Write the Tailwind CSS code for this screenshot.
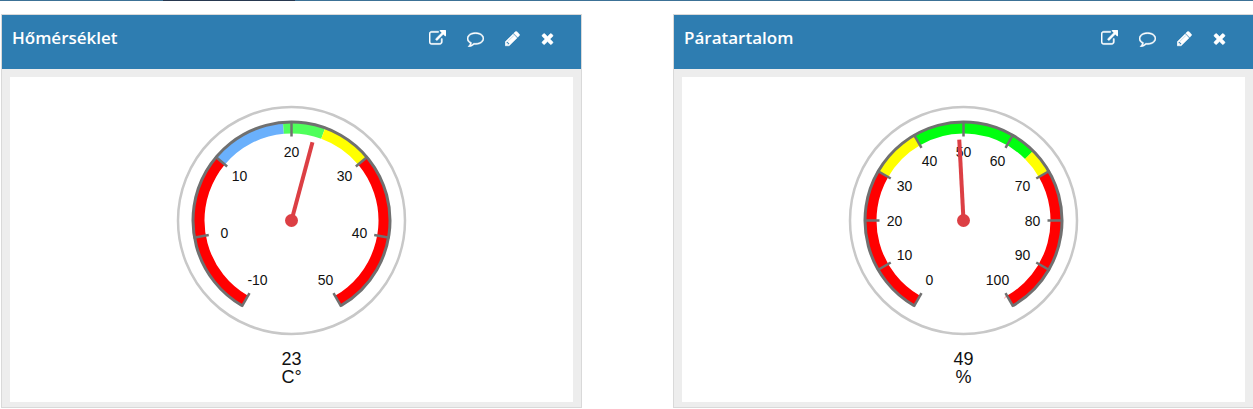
<!DOCTYPE html>
<html lang="hu">
<head>
    <meta charset="UTF-8">
    <meta name="viewport" content="width=device-width, initial-scale=1.0">
    <title>Hőmérséklet és páratartalom</title>
    <script src="https://cdn.jsdelivr.net/npm/@tailwindcss/browser@4"></script>
</head>
<body class="bg-white overflow-x-hidden font-['Liberation_Sans',Arial,sans-serif]">
    <!-- Shared icons -->
    <svg class="hidden" aria-hidden="true">
        <symbol id="icon-export" viewBox="0 0 1792 1792">
            <path d="M1408 928v320q0 119-84.5 203.5t-203.5 84.5h-832q-119 0-203.5-84.5t-84.5-203.5v-832q0-119 84.5-203.5t203.5-84.5h704q14 0 23 9t9 23v64q0 14-9 23t-23 9h-704q-66 0-113 47t-47 113v832q0 66 47 113t113 47h832q66 0 113-47t47-113v-320q0-14 9-23t23-9h64q14 0 23 9t9 23zm384-864v512q0 26-19 45t-45 19-45-19l-176-176-652 652q-10 10-23 10t-23-10l-114-114q-10-10-10-23t10-23l652-652-176-176q-19-19-19-45t19-45 45-19h512q26 0 45 19t19 45z"/>
        </symbol>
        <symbol id="icon-comment" viewBox="0 0 1792 1792">
            <path d="M896 384q-204 0-381.500 69.500t-282 187.500-104.500 255q0 112 71.500 213.500t201.500 175.500l87 50-27 96q-24 91-70 172 152-63 275-171l43-38 57 6q69 8 130 8 204 0 381.500-69.500t282-187.500 104.500-255-104.500-255-282-187.500-381.500-69.500zm896 512q0 174-120 321.500t-326 233-450 85.500q-70 0-145-8-198 175-460 242-49 14-114 22h-5q-15 0-27-10.500t-16-27.500v-1q-3-4-.5-12t2-10 4.500-9.500l6-9 7-8.500 8-9q7-8 31-34.500t34.500-38 31-39.500 32.500-51 27-59 26-76q-157-89-247.500-220t-90.500-281q0-174 120-321.500t326-233 450-85.500 450 85.500 326 233 120 321.500z"/>
        </symbol>
        <symbol id="icon-pencil" viewBox="128 0 1536 1792">
            <path d="M491 1536l91-91-235-235-91 91v107h128v128h107zm523-928q0-22-22-22-10 0-17 7l-542 542q-7 7-7 17 0 22 22 22 10 0 17-7l542-542q7-7 7-17zm-54-192l416 416-832 832h-416v-416zm683 96q0 53-37 90l-166 166-416-416 166-165q36-38 90-38 53 0 91 38l235 234q37 39 37 91z"/>
        </symbol>
        <symbol id="icon-close" viewBox="192 0 1408 1792">
            <path d="M1490 1322q0 40-28 68l-136 136q-28 28-68 28t-68-28l-294-294-294 294q-28 28-68 28t-68-28l-136-136q-28-28-28-68t28-68l294-294-294-294q-28-28-28-68t28-68l136-136q28-28 68-28t68 28l294 294 294-294q28-28 68-28t68 28l136 136q28 28 28 68t-28 68l-294 294 294 294q28 28 28 68z"/>
        </symbol>
    </svg>

    <div class="flex h-px bg-[#3c7196]">
        <div class="ml-[163px] w-[132px] bg-[#26374f]"></div>
    </div>

    <main class="grid grid-cols-2 gap-[91px] pt-[13px] ml-px -mr-px">
        <!-- Temperature -->
        <section class="border border-[#d9d9d9] bg-[#ededed]">
            <header class="flex h-[54px] items-start justify-between bg-[#2e7db1] pl-[10px] pr-[27px] pt-[11px] text-white">
                <h2 class="font-['Trebuchet_MS','Open_Sans',sans-serif] text-[17px] leading-6 font-semibold">Hőmérséklet</h2>
                <div class="flex h-6 items-center gap-[21px]">
                    <button type="button" aria-label="Exportálás" class="cursor-pointer"><svg class="block h-[17px] w-[17px] fill-current stroke-current stroke-[50]"><use href="#icon-export"/></svg></button>
                    <button type="button" aria-label="Megjegyzés" class="cursor-pointer"><svg class="block h-[17px] w-[17px] fill-current stroke-current stroke-[50]"><use href="#icon-comment"/></svg></button>
                    <button type="button" aria-label="Szerkesztés" class="cursor-pointer"><svg class="block h-[17px] w-[15px] fill-current stroke-current stroke-[50]"><use href="#icon-pencil"/></svg></button>
                    <button type="button" aria-label="Bezárás" class="cursor-pointer"><svg class="block h-[17px] w-[13px] fill-current stroke-current stroke-[50]"><use href="#icon-close"/></svg></button>
                </div>
            </header>
            <div class="px-2 pt-2 pb-[5px]">
                <div class="flex flex-col items-center bg-white pt-[27px] pb-4">
                    <!-- 5 degrees per unit, 0 degrees is up -->
                    <svg class="block h-[233px] w-[233px]" viewBox="-116.5 -116.5 233 233" fill="none">
                        <circle r="113.500" stroke="#c8c8c8" stroke-width="2.500"/>
                        <g stroke-width="11">
                            <circle r="92.500" pathLength="360" stroke="#ff0000" stroke-dasharray="100 360" transform="rotate(-240)"/>
                            <circle r="92.500" pathLength="360" stroke="#6ab0fc" stroke-dasharray="45 360" transform="rotate(-140)"/>
                            <circle r="92.500" pathLength="360" stroke="#4fff5b" stroke-dasharray="25 360" transform="rotate(-95)"/>
                            <circle r="92.500" pathLength="360" stroke="#ffff00" stroke-dasharray="30 360" transform="rotate(-70)"/>
                            <circle r="92.500" pathLength="360" stroke="#ff0000" stroke-dasharray="100 360" transform="rotate(-40)"/>
                        </g>
                        <g stroke="#707070" stroke-width="2.500">
                            <circle r="98.500" stroke-width="3" pathLength="360" stroke-dasharray="300 360" transform="rotate(-240)"/>
                            <path d="M0-84V-99.500" transform="rotate(-150)"/>
                            <path d="M0-84V-99.500" transform="rotate(-100)"/>
                            <path d="M0-84V-99.500" transform="rotate(-50)"/>
                            <path d="M0-84V-99.500"/>
                            <path d="M0-84V-99.500" transform="rotate(50)"/>
                            <path d="M0-84V-99.500" transform="rotate(100)"/>
                            <path d="M0-84V-99.500" transform="rotate(150)"/>
                        </g>
                        <g class="text-[14px]" fill="#111" text-anchor="middle">
                            <text x="-34" y="64">-10</text>
                            <text x="-67" y="17">0</text>
                            <text x="-52" y="-40">10</text>
                            <text x="0" y="-64">20</text>
                            <text x="53" y="-40">30</text>
                            <text x="68" y="17">40</text>
                            <text x="34" y="64">50</text>
                        </g>
                        <path d="M0 0V-81" stroke="#dc3f44" stroke-width="4" transform="rotate(15)"/>
                        <circle r="6.500" fill="#dc3f44"/>
                    </svg>
                    <p class="mt-[13px] text-center text-[18px] leading-[18px] text-[#111]">23<br>C°</p>
                </div>
            </div>
        </section>

        <!-- Humidity -->
        <section class="border border-[#d9d9d9] bg-[#ededed]">
            <header class="flex h-[54px] items-start justify-between bg-[#2e7db1] pl-[10px] pr-[27px] pt-[11px] text-white">
                <h2 class="font-['Trebuchet_MS','Open_Sans',sans-serif] text-[17px] leading-6 font-semibold">Páratartalom</h2>
                <div class="flex h-6 items-center gap-[21px]">
                    <button type="button" aria-label="Exportálás" class="cursor-pointer"><svg class="block h-[17px] w-[17px] fill-current stroke-current stroke-[50]"><use href="#icon-export"/></svg></button>
                    <button type="button" aria-label="Megjegyzés" class="cursor-pointer"><svg class="block h-[17px] w-[17px] fill-current stroke-current stroke-[50]"><use href="#icon-comment"/></svg></button>
                    <button type="button" aria-label="Szerkesztés" class="cursor-pointer"><svg class="block h-[17px] w-[15px] fill-current stroke-current stroke-[50]"><use href="#icon-pencil"/></svg></button>
                    <button type="button" aria-label="Bezárás" class="cursor-pointer"><svg class="block h-[17px] w-[13px] fill-current stroke-current stroke-[50]"><use href="#icon-close"/></svg></button>
                </div>
            </header>
            <div class="px-2 pt-2 pb-[5px]">
                <div class="flex flex-col items-center bg-white pt-[27px] pb-4">
                    <!-- 3 degrees per unit -->
                    <svg class="block h-[233px] w-[233px]" viewBox="-116.5 -116.5 233 233" fill="none">
                        <circle r="113.500" stroke="#c8c8c8" stroke-width="2.500"/>
                        <g stroke-width="11">
                            <circle r="92.500" pathLength="360" stroke="#ff0000" stroke-dasharray="90 360" transform="rotate(-240)"/>
                            <circle r="92.500" pathLength="360" stroke="#ffff00" stroke-dasharray="30 360" transform="rotate(-150)"/>
                            <circle r="92.500" pathLength="360" stroke="#00ff0f" stroke-dasharray="75 360" transform="rotate(-120)"/>
                            <circle r="92.500" pathLength="360" stroke="#ffff00" stroke-dasharray="15 360" transform="rotate(-45)"/>
                            <circle r="92.500" pathLength="360" stroke="#ff0000" stroke-dasharray="90 360" transform="rotate(-30)"/>
                        </g>
                        <g stroke="#707070" stroke-width="2.500">
                            <circle r="98.500" stroke-width="3" pathLength="360" stroke-dasharray="300 360" transform="rotate(-240)"/>
                            <path d="M0-84V-99.500" transform="rotate(-150)"/>
                            <path d="M0-84V-99.500" transform="rotate(-120)"/>
                            <path d="M0-84V-99.500" transform="rotate(-90)"/>
                            <path d="M0-84V-99.500" transform="rotate(-60)"/>
                            <path d="M0-84V-99.500" transform="rotate(-30)"/>
                            <path d="M0-84V-99.500"/>
                            <path d="M0-84V-99.500" transform="rotate(30)"/>
                            <path d="M0-84V-99.500" transform="rotate(60)"/>
                            <path d="M0-84V-99.500" transform="rotate(90)"/>
                            <path d="M0-84V-99.500" transform="rotate(120)"/>
                            <path d="M0-84V-99.500" transform="rotate(150)"/>
                        </g>
                        <g class="text-[14px]" fill="#111" text-anchor="middle">
                            <text x="-34" y="64">0</text>
                            <text x="-59" y="39">10</text>
                            <text x="-69" y="5">20</text>
                            <text x="-59" y="-30">30</text>
                            <text x="-34" y="-55">40</text>
                            <text x="0" y="-64">50</text>
                            <text x="34" y="-55">60</text>
                            <text x="59" y="-30">70</text>
                            <text x="69" y="5">80</text>
                            <text x="59" y="39">90</text>
                            <text x="34" y="64">100</text>
                        </g>
                        <path d="M0 0V-81" stroke="#dc3f44" stroke-width="4" transform="rotate(-3)"/>
                        <circle r="6.500" fill="#dc3f44"/>
                    </svg>
                    <p class="mt-[13px] text-center text-[18px] leading-[18px] text-[#111]">49<br>%</p>
                </div>
            </div>
        </section>
    </main>
</body>
</html>
